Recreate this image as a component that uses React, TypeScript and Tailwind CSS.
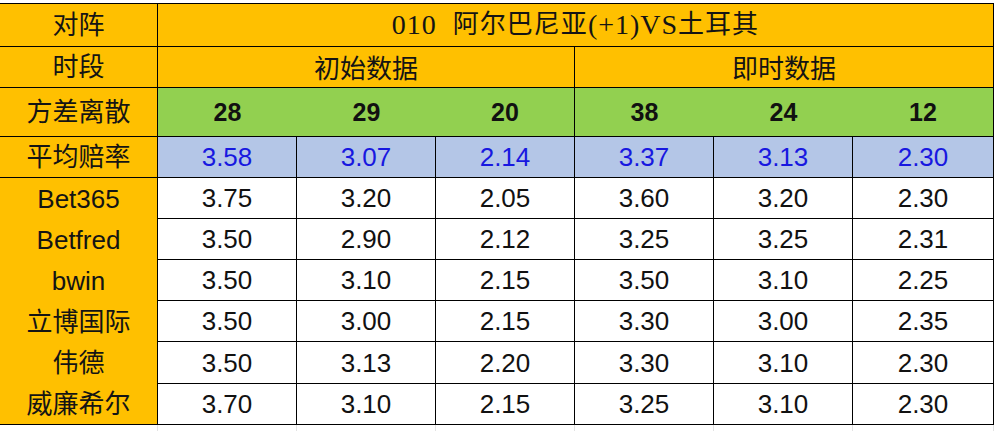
import React from "react";

const sans = { fontFamily: '"Liberation Sans","Noto Sans CJK SC",sans-serif' };
const cjk = { fontFamily: '"Noto Sans CJK SC","Liberation Sans",sans-serif' };

const colW = ["w-[158px]", "w-[139px]", "w-[139px]", "w-[139px]", "w-[139px]", "w-[139px]", "w-[141px]"];

const diffs = ["28", "29", "20", "38", "24", "12"];
const avgs = ["3.58", "3.07", "2.14", "3.37", "3.13", "2.30"];
const rows: { name: string; vals: string[]; h: string }[] = [
  { name: "Bet365", vals: ["3.75", "3.20", "2.05", "3.60", "3.20", "2.30"], h: "h-[41px]" },
  { name: "Betfred", vals: ["3.50", "2.90", "2.12", "3.25", "3.25", "2.31"], h: "h-[41px]" },
  { name: "bwin", vals: ["3.50", "3.10", "2.15", "3.50", "3.10", "2.25"], h: "h-[41px]" },
  { name: "立博国际", vals: ["3.50", "3.00", "2.15", "3.30", "3.00", "2.35"], h: "h-[41px]" },
  { name: "伟德", vals: ["3.50", "3.13", "2.20", "3.30", "3.10", "2.30"], h: "h-[42px]" },
  { name: "威廉希尔", vals: ["3.70", "3.10", "2.15", "3.25", "3.10", "2.30"], h: "h-[41px]" },
];

function Label({ children, h, bottom = true }: { children: React.ReactNode; h: string; bottom?: boolean }) {
  return (
    <div
      className={`${colW[0]} ${h} shrink-0 bg-[#FFC000] border-r border-black ${bottom ? "border-b" : ""} flex items-center justify-center text-[26px] leading-none text-[#141414]`}
      style={sans}
    >
      {children}
    </div>
  );
}

export default function App() {
  return (
    <div className="w-[998px] h-[431px] bg-white overflow-hidden pt-[3px]">
      <div className="flex flex-col w-[994px] border-t border-black">
        {/* Row 0 */}
        <div className="flex">
          <Label h="h-[43px]">对阵</Label>
          <div
            className="w-[836px] h-[43px] bg-[#FFC000] border-r border-b border-black flex items-center justify-center text-[26px] leading-none text-[#141414] whitespace-pre tracking-[1px]"
            style={{ fontFamily: '"Liberation Serif","Noto Sans CJK SC",serif' }}
          >
            <span className="text-[28px]">{"010  "}</span>
            <span>阿尔巴尼亚</span>
            <span className="text-[28px]">(+1)VS</span>
            <span>土耳其</span>
          </div>
        </div>
        {/* Row 1 */}
        <div className="flex">
          <Label h="h-[41px]">时段</Label>
          <div
            className="w-[417px] h-[41px] bg-[#FFC000] border-r border-b border-black flex items-center justify-center text-[26px] leading-none text-[#141414]"
            style={cjk}
          >
            初始数据
          </div>
          <div
            className="w-[419px] h-[41px] bg-[#FFC000] border-r border-b border-black flex items-center justify-center text-[26px] leading-none text-[#141414]"
            style={cjk}
          >
            即时数据
          </div>
        </div>
        {/* Row 2 */}
        <div className="flex">
          <Label h="h-[49px]">方差离散</Label>
          {diffs.map((d, i) => (
            <div
              key={i}
              className={`${colW[i + 1]} h-[49px] bg-[#92D050] border-b border-black ${i === 2 || i === 5 ? "border-r" : ""} flex items-center justify-center text-[25px] font-bold leading-none text-[#111]`}
              style={sans}
            >
              {d}
            </div>
          ))}
        </div>
        {/* Row 3 */}
        <div className="flex">
          <Label h="h-[41px]">平均赔率</Label>
          {avgs.map((d, i) => (
            <div
              key={i}
              className={`${colW[i + 1]} h-[41px] bg-[#B4C6E7] border-b border-r border-black flex items-center justify-center text-[26px] leading-none text-[#1818E0]`}
              style={sans}
            >
              {d}
            </div>
          ))}
        </div>
        {/* Bookmaker rows */}
        {rows.map((r, ri) => (
          <div key={ri} className="flex">
            <Label h={r.h} bottom={ri === rows.length - 1}>
              {r.name}
            </Label>
            {r.vals.map((v, i) => (
              <div
                key={i}
                className={`${colW[i + 1]} ${r.h} bg-white border-b border-r border-black flex items-center justify-center text-[26px] leading-none text-[#111]`}
                style={sans}
              >
                {v}
              </div>
            ))}
          </div>
        ))}
        {/* faint sheet gridlines below */}
        <div className="flex h-[10px]">
          {colW.map((w, i) => (
            <div key={i} className={`${w} h-full border-r border-[#e3e3e3]`} />
          ))}
        </div>
      </div>
    </div>
  );
}
